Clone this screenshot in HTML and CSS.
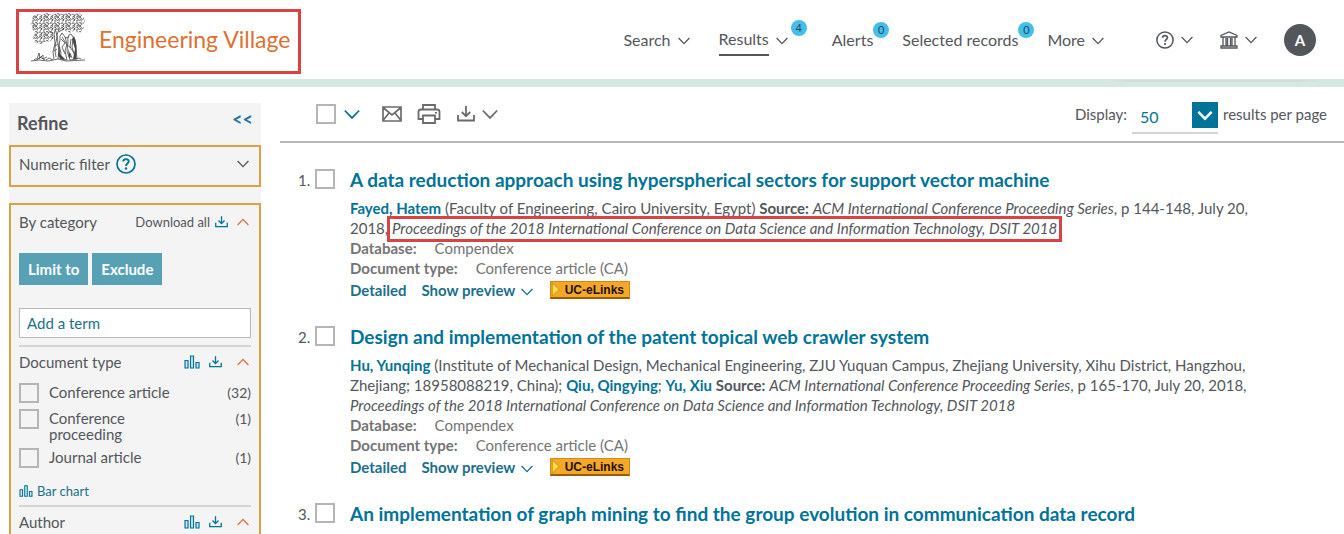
FILE: index.html
```html
<!DOCTYPE html>
<html lang="en">
<head>
<meta charset="utf-8">
<title>Engineering Village - Results</title>
<link rel="stylesheet" href="styles.css">
</head>
<body>
<svg class="defs" aria-hidden="true">
  <symbol id="chev" viewBox="0 0 12 8"><path d="M.6 1 6 6.6 11.4 1" fill="none" stroke="currentColor" stroke-width="1.3"/></symbol>
  <symbol id="bars" viewBox="0 0 16 14"><path d="M1 5.500h3v7.500H1zM6.500 1h3v12h-3zM12 7.500h3V13h-3z" fill="#cfe6ee" stroke="currentColor" stroke-width="1.2"/></symbol>
  <symbol id="down" viewBox="0 0 18 16"><path d="M1 9v5.500h16V9M9 0v10M4.800 6 9 10.200 13.200 6" fill="none" stroke="currentColor" stroke-width="1.800"/></symbol>
  <symbol id="help" viewBox="0 0 20 20"><circle cx="10" cy="10" r="9" fill="none" stroke="currentColor" stroke-width="1.700"/><path d="M7.300 7.600C7.300 4.300 12.800 4.300 12.700 7.500 12.600 9.500 10 9.400 10 12" fill="none" stroke="currentColor" stroke-width="1.900"/><circle cx="10" cy="14.500" r="1.200" fill="currentColor"/></symbol>
</svg>

<header class="header">
  <a class="brand" href="#">
    <svg class="tree" viewBox="0 0 54 49" aria-hidden="true">
      <defs>
        <pattern id="leaf" width="11" height="9" patternUnits="userSpaceOnUse"><path d="M.3 2.400Q1.500-.5 3 1.400T1.500 3.600M4.200.6Q7 .2 6.400 2.400T3.900 3M.4 6Q1.800 3.800 3 6T1 8M4 5Q6 3.600 6.300 5.400T4.200 7.400M7.600 1.600Q9.600-.4 10.400 2T8.400 4M7.500 7Q8.400 4.400 10.300 6T9 8.300M6 8.300 7 7.500M2.600 4.400 4 3.800M10.200 4.200 11 5" fill="none" stroke="#333" stroke-width=".85"/></pattern>
      </defs>
      <path d="M2 3 7 1 11 2 16 0 21 2 26 0 32 1 37 0 43 1 48 0 52 3 54 8 52 12 53 16 49 20 43 18 38 20 33 17 29 19 25 17 22 20 24 24 20 28 14 29 10 31 4 30 2 25 4 20 1 16 0 9z" fill="url(#leaf)"/>
      <g fill="none" stroke="#444" stroke-width=".8">
        <path d="M25 16 23 21 24 30 22 39 23 46M28 16 26 22 27 31 28 38 27 46M25 18Q27 24 25 29T25 44M22 20 18 18M28 19 32 16M24 33 27 31M23 38 26 36"/>
        <path d="M31 20Q28 23 29 27L28 32 30 40 29 46 36 47 34 38 36 31 34 24 31 20M30 26 34 30 31 34 34 41M34 25 38 24M31 24 36 32 40 35"/>
        <path d="M38 22Q36 25 37 29L36 38 39 47 46 46 45 37 44 27 40 21 38 22M40 26 39 34 43 40M42 26 41 34 44 44M39 40 41 45"/>
        <path d="M0 48 8 47 17 48 27 46 35 48 54 47M3 47 4 46 6 46 8 40 9 45 12 42 12 46 16 44M44 46 48 45 50 46M15 47 18 45 22 47M8 46 11 43M6 47 9 44 14 47"/>
      </g>
      <path d="M43 23Q47 31 45 46L42 46 44 36 41 26zM28 30 29 41 34 46 30 46 27 43zM37 35 40 44 38 45z" fill="#484848"/>
    </svg>
    <span class="brand-name">Engineering Village</span>
  </a>
  <nav class="nav">
    <a class="nav-item" href="#">Search <svg class="chev"><use href="#chev"/></svg></a>
    <a class="nav-item results-link" href="#"><span class="current">Results</span> <svg class="chev"><use href="#chev"/></svg><span class="badge badge-high">4</span></a>
    <a class="nav-item" href="#">Alerts<span class="badge">0</span></a>
    <a class="nav-item" href="#">Selected records<span class="badge">0</span></a>
    <a class="nav-item" href="#">More <svg class="chev"><use href="#chev"/></svg></a>
  </nav>
  <div class="tools">
    <button class="icon-btn" aria-label="Help"><svg class="icon18"><use href="#help"/></svg><svg class="chev"><use href="#chev"/></svg></button>
    <button class="icon-btn" aria-label="Institution"><svg class="icon18" viewBox="0 0 18 18"><path d="M1 6V4.500L9 1l8 3.500V6zM1 17v-2h16v2zM3 6v9M6 7v8M7.500 7v8M10.500 7v8M12 7v8M15 6v9" fill="none" stroke="currentColor" stroke-width="1.300"/></svg><svg class="chev"><use href="#chev"/></svg></button>
    <button class="avatar" aria-label="Account">A</button>
  </div>
</header>

<div class="page">
  <aside class="sidebar">
    <div class="refine"><h2>Refine</h2><a href="#" class="collapse">&lt;&lt;</a></div>
    <section class="panel numeric">
      <span>Numeric filter</span><svg class="help-icon"><use href="#help"/></svg><svg class="chev push"><use href="#chev"/></svg>
    </section>
    <section class="panel category">
      <div class="row">
        <span>By category</span>
        <a class="download push" href="#">Download all <svg class="down"><use href="#down"/></svg></a>
        <svg class="chev up"><use href="#chev"/></svg>
      </div>
      <div class="buttons"><button class="btn">Limit to</button><button class="btn">Exclude</button></div>
      <input class="term" type="text" placeholder="Add a term" aria-label="Add a term">
      <div class="row facet-head">
        <span>Document type</span><svg class="bars push"><use href="#bars"/></svg><svg class="down"><use href="#down"/></svg><svg class="chev up"><use href="#chev"/></svg>
      </div>
      <ul class="facets">
        <li><input class="check" type="checkbox" id="f1"><label for="f1">Conference article</label><span class="count">(32)</span></li>
        <li><input class="check" type="checkbox" id="f2"><label for="f2">Conference proceeding</label><span class="count">(1)</span></li>
        <li><input class="check" type="checkbox" id="f3"><label for="f3">Journal article</label><span class="count">(1)</span></li>
      </ul>
      <a class="chart-link" href="#"><svg class="bars small"><use href="#bars"/></svg>Bar chart</a>
      <div class="row facet-head">
        <span>Author</span><svg class="bars push"><use href="#bars"/></svg><svg class="down"><use href="#down"/></svg><svg class="chev up"><use href="#chev"/></svg>
      </div>
    </section>
  </aside>

  <main class="main">
    <div class="toolbar">
      <input class="check" type="checkbox" aria-label="Select all">
      <svg class="chev big teal"><use href="#chev"/></svg>
      <button class="tool mail" aria-label="Email"><svg width="20" height="16" viewBox="0 0 20 16"><path d="M1 1h18v14H1zM1 1.500 10 9l9-7.500M1 14.500 7 7M19 14.500 13 7" fill="none" stroke="currentColor" stroke-width="1.700"/></svg></button>
      <button class="tool print" aria-label="Print"><svg width="24" height="20" viewBox="0 0 24 20"><path d="M6 5V1h12v4M6 15H1.500V8Q1.500 5.500 4 5.500h16q2.500 0 2.500 2.500v7H18M6 11.500h12V19H6z" fill="none" stroke="currentColor" stroke-width="1.800"/><path d="M18 8h2v1.500h-2z" fill="currentColor"/></svg></button>
      <button class="tool" aria-label="Download"><svg class="down-big"><use href="#down"/></svg><svg class="chev big"><use href="#chev"/></svg></button>
      <div class="display">
        <label for="count">Display:</label>
        <span class="select"><select id="count"><option>50</option></select><span class="arrow"><svg class="chev big" viewBox="0 0 12 8"><path d="M1 1.200 6 6.300 11 1.200" fill="none" stroke="currentColor" stroke-width="1.900"/></svg></span></span>
        <span>results per page</span>
      </div>
    </div>

    <ol class="list">
      <li class="item">
        <span class="num">1.</span><input class="check" type="checkbox" aria-label="Select result 1">
        <article class="body">
          <h3><a href="#">A data reduction approach using hyperspherical sectors for support vector machine</a></h3>
          <p class="cite"><a href="#">Fayed, Hatem</a> (Faculty of Engineering, Cairo University, Egypt) <b>Source:</b> <i>ACM International Conference Proceeding Series</i>, p 144-148, July 20,<br>2018, <i class="marked">Proceedings of the 2018 International Conference on Data Science and Information Technology, DSIT 2018</i></p>
          <p class="meta"><b>Database:</b>Compendex</p>
          <p class="meta"><b>Document type:</b>Conference article (CA)</p>
          <div class="actions"><a href="#">Detailed</a><a href="#">Show preview <svg class="chev"><use href="#chev"/></svg></a><a class="elinks" href="#"><svg viewBox="0 0 9 18"><path d="M0 1 8 9 0 17z" fill="#ffe04a" stroke="#c98614"/></svg>UC-eLinks</a></div>
        </article>
      </li>
      <li class="item">
        <span class="num">2.</span><input class="check" type="checkbox" aria-label="Select result 2">
        <article class="body">
          <h3><a href="#">Design and implementation of the patent topical web crawler system</a></h3>
          <p class="cite"><a href="#">Hu, Yunqing</a> (Institute of Mechanical Design, Mechanical Engineering, ZJU Yuquan Campus, Zhejiang University, Xihu District, Hangzhou,<br>Zhejiang; 18958088219, China); <a href="#">Qiu, Qingying</a>; <a href="#">Yu, Xiu</a> <b>Source:</b> <i>ACM International Conference Proceeding Series</i>, p 165-170, July 20, 2018,<br><i>Proceedings of the 2018 International Conference on Data Science and Information Technology, DSIT 2018</i></p>
          <p class="meta"><b>Database:</b>Compendex</p>
          <p class="meta"><b>Document type:</b>Conference article (CA)</p>
          <div class="actions"><a href="#">Detailed</a><a href="#">Show preview <svg class="chev"><use href="#chev"/></svg></a><a class="elinks" href="#"><svg viewBox="0 0 9 18"><path d="M0 1 8 9 0 17z" fill="#ffe04a" stroke="#c98614"/></svg>UC-eLinks</a></div>
        </article>
      </li>
      <li class="item">
        <span class="num">3.</span><input class="check" type="checkbox" aria-label="Select result 3">
        <article class="body"><h3><a href="#">An implementation of graph mining to find the group evolution in communication data record</a></h3></article>
      </li>
    </ol>
  </main>
</div>
</body>
</html>
```

FILE: styles.css
```css
* { box-sizing: border-box; }
body { margin: 0; height: 100vh; overflow: hidden; display: flex; flex-direction: column; background: #fff; color: #53565a; font: 15px/20px Lato, "Open Sans", sans-serif; }
a { color: inherit; text-decoration: none; }
button, input, select { font: inherit; color: inherit; }
button { border: 0; background: none; padding: 0; }
h2, h3, p, ul, ol { margin: 0; padding: 0; }
ul, ol { list-style: none; }
svg { flex: none; }
.defs { position: absolute; width: 0; height: 0; }
.push { margin-left: auto; }

.chev { width: 12px; height: 8px; }
.chev.big { width: 16px; height: 11px; }
.chev.up { transform: rotate(180deg); color: #e0703c; }
.teal { color: #007398; }

.check { appearance: none; flex: none; width: 20px; height: 20px; margin: 0; border: 2px solid #b5b5b5; background: transparent; }

.header { position: relative; flex: none; height: 87px; display: flex; align-items: center; padding: 0 28px 0 16px; border-bottom: 8px solid #d5e8e1; }
.header::after { content: ""; position: absolute; right: 24px; bottom: -3px; width: 210px; height: 2px; background: linear-gradient(90deg, transparent, #d3dcd8 10%, #d3dcd8 90%, transparent); }
.brand { display: flex; align-items: center; gap: 14px; height: 65px; margin-top: 3px; padding: 0 8px 8px 12px; border: 3px solid #d84343; }
.tree { width: 54px; height: 49px; }
.brand-name { color: #e07030; font-size: 23px; line-height: 28px; padding-top: 4px; white-space: nowrap; }
.nav { display: flex; gap: 29px; margin-left: auto; font-size: 16px; }
.nav-item { position: relative; display: flex; align-items: center; gap: 7px; height: 32px; white-space: nowrap; }
.nav-item .chev { margin-top: 3px; }
.results-link { padding-right: 15px; }
.current { align-self: stretch; line-height: 30px; border-bottom: 2px solid #53565a; }
.badge { position: absolute; left: 100%; top: -2px; width: 16px; height: 16px; border-radius: 50%; background: #45bfe8; font-size: 11px; line-height: 16px; text-align: center; color: #1c4a60; }
.badge-high { left: auto; right: -4px; top: -4px; }
.tools { display: flex; align-items: center; gap: 27px; margin-left: 52px; }
.icon-btn { display: flex; align-items: center; gap: 7px; }
.icon18 { width: 18px; height: 18px; }
.avatar { width: 32px; height: 32px; border-radius: 50%; background: #53565a; color: #fff; font-weight: 700; }

.page { flex: 1; min-height: 0; display: flex; gap: 19px; padding-left: 9px; }
.sidebar { flex: none; width: 252px; margin-top: 16px; display: flex; flex-direction: column; background: #f4f4f4; }
.refine { flex: none; display: flex; justify-content: space-between; height: 42px; padding: 10px 8px; }
.refine h2 { font-size: 18px; line-height: 20px; }
.collapse { color: #2075a8; font-size: 18px; line-height: 12px; font-weight: 700; }
.panel { border: 2px solid #dea045; padding: 0 8px; }
.numeric { flex: none; height: 42px; display: flex; align-items: center; gap: 6px; padding-right: 10px; padding-bottom: 4px; }
.help-icon { width: 20px; height: 20px; color: #007398; }
.category { flex: 1; min-height: 0; margin-top: 16px; border-bottom: 0; overflow: hidden; }
.row { display: flex; align-items: center; gap: 9px; padding-right: 2px; height: 34px; }
.download { display: flex; align-items: center; gap: 5px; font-size: 13px; }
.down { width: 13px; height: 12px; color: #007398; }
.buttons { display: flex; gap: 4px; margin-top: 14px; }
.btn { height: 32px; padding: 0 9px; background: #58a1b5; color: #fff; font-weight: 700; }
.term { display: block; width: 100%; height: 30px; margin: 23px 0 7px; padding: 0 7px; border: 1px solid #b9b9b9; background: #fff; }
.term::placeholder { color: #1a6f8c; opacity: 1; }
.facet-head { height: 32px; border-top: 2px solid #d4d4d4; }
.facet-head .chev { margin-left: 6px; }
.bars { width: 16px; height: 14px; color: #007398; }
.bars.small { width: 14px; height: 12px; }
.facets { display: flex; flex-direction: column; gap: 6px; margin-top: 6px; }
.facets li { display: flex; gap: 10px; }
.facets label { width: 140px; line-height: 16px; padding-top: 1px; }
.count { margin-left: auto; font-size: 14px; }
.chart-link { display: flex; align-items: center; gap: 4px; margin: 13px 0 4px; color: #1a6f8c; font-size: 13px; }

.main { flex: 1; min-width: 0; }
.toolbar { display: flex; align-items: center; height: 56px; padding: 0 17px 0 36px; border-bottom: 2px solid #b9b9b9; color: #6b6b6b; }
.toolbar .teal { margin-left: 8px; }
.tool { display: flex; align-items: center; gap: 7px; }
.mail { margin-left: 22px; }
.print { margin: 0 16px 0 15px; }
.down-big { width: 18px; height: 16px; }
.display { display: flex; align-items: center; gap: 5px; margin-left: auto; color: #53565a; }
.select { position: relative; height: 32px; margin-top: 8px; border-bottom: 2px solid #d4d4d4; display: flex; }
.select select { appearance: none; width: 86px; padding: 0 8px; border: 0; background: none; color: #007398; font-size: 16px; }
.arrow { position: absolute; right: 0; top: 0; width: 26px; height: 26px; display: grid; place-items: center; background: #007398; color: #fff; pointer-events: none; }

.list { padding: 25px 60px 0 18px; display: flex; flex-direction: column; gap: 23px; }
.item { display: flex; }
.num { flex: none; width: 17px; line-height: 24px; }
.item .check { margin-top: 1px; }
.body { margin-left: 15px; }
.body h3 { color: #007398; font-size: 19px; line-height: 24px; margin-bottom: 6px; white-space: nowrap; }
.cite { white-space: nowrap; }
.cite a { color: #007398; font-weight: 700; }
.marked { margin: 0 -2px; padding: 0 2px 2px; outline: 3px solid #d84343; }
.meta { color: #747474; }
.meta b { margin-right: 18px; }
.actions { display: flex; align-items: center; gap: 15px; height: 24px; color: #1a6f8c; font-weight: 700; }
.actions .chev { margin-left: 2px; }
.elinks { display: flex; align-items: center; height: 18px; margin-left: 2px; padding-right: 5px; gap: 4px; border: 1px solid #d18a18; border-bottom: 2px solid #9c5c08; background: #f5a828; color: #1d1208; font: 700 12px/14px "Liberation Sans", Arial, sans-serif; }
.elinks svg { width: 10px; height: 15px; }
```
